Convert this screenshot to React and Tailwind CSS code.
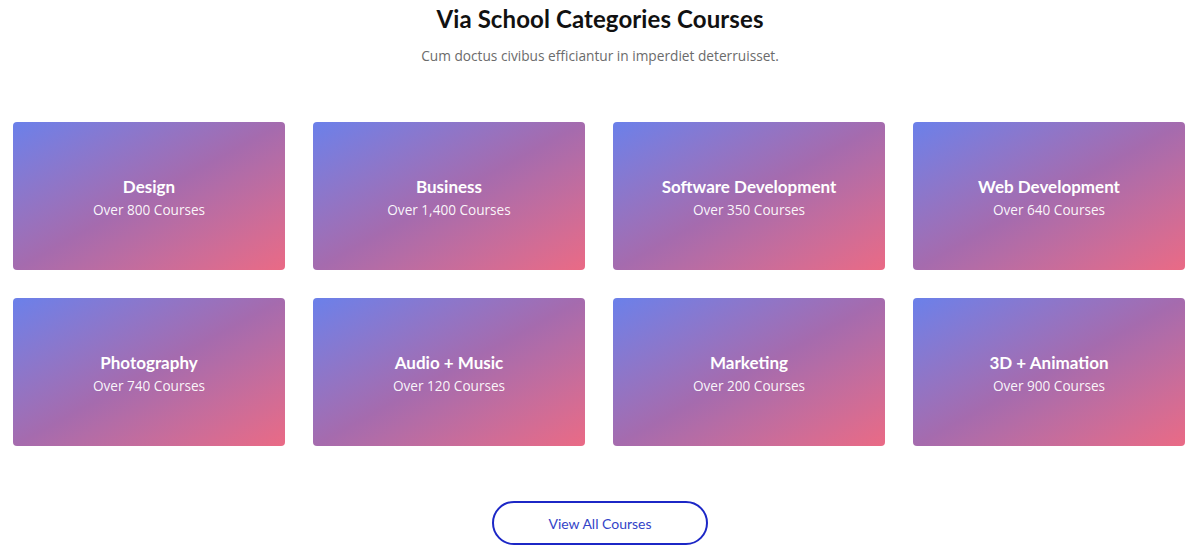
const categories = [
  { title: "Design", count: "Over 800 Courses" },
  { title: "Business", count: "Over 1,400 Courses" },
  { title: "Software Development", count: "Over 350 Courses" },
  { title: "Web Development", count: "Over 640 Courses" },
  { title: "Photography", count: "Over 740 Courses" },
  { title: "Audio + Music", count: "Over 120 Courses" },
  { title: "Marketing", count: "Over 200 Courses" },
  { title: "3D + Animation", count: "Over 900 Courses" },
];

export default function App() {
  return (
    <div className="w-[1200px] h-[555px] bg-white overflow-hidden font-['Lato','Open_Sans',sans-serif]">
      <div className="flex flex-col items-center pt-[4px]">
        <h2 className="text-[24px] leading-[30px] font-bold text-[#111] tracking-[0.1px]">Via School Categories Courses</h2>
        <p className="mt-[12px] text-[13.7px] leading-[20px] text-[#6b6b6b] font-['Open_Sans',sans-serif]">
          Cum doctus civibus efficiantur in imperdiet deterruisset.
        </p>
      </div>

      <div className="grid grid-cols-4 gap-x-[28px] gap-y-[28px] pl-[13px] pr-[15px] mt-[56px]">
        {categories.map((c) => (
          <a
            key={c.title}
            href="#"
            className="h-[148px] rounded-[4px] bg-linear-to-br from-[#6a80ea] via-[#a56bae] to-[#ea6a85] flex flex-col items-center justify-center text-white pt-[4px]"
          >
            <h3 className="text-[17px] leading-[22px] font-bold">{c.title}</h3>
            <p className="mt-[2px] text-[13.6px] leading-[20px] font-['Open_Sans',sans-serif] text-white/95">{c.count}</p>
          </a>
        ))}
      </div>

      <div className="flex justify-center mt-[55px]">
        <button className="w-[216px] h-[44px] rounded-full border-2 border-[#1c27c6] text-[#3344c8] text-[14px] font-['Lato',sans-serif]">
          View All Courses
        </button>
      </div>
    </div>
  );
}
